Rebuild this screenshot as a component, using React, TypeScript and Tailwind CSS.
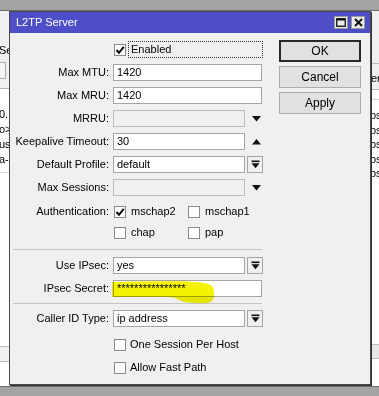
import React from "react";

const Check = () => (
  <svg width="10" height="10" viewBox="0 0 10 10" className="block">
    <path d="M1.5 5 L4 7.8 L8.7 1.8" stroke="#000" strokeWidth="1.9" fill="none" />
  </svg>
);

function Box({ checked }: { checked?: boolean }) {
  return (
    <div className="w-[12px] h-[12px] border border-[#8a8a8a] bg-white flex items-center justify-center shrink-0">
      {checked ? <Check /> : null}
    </div>
  );
}

const DownTri = () => (
  <svg width="9" height="6" viewBox="0 0 9 6" className="block">
    <polygon points="0,0 9,0 4.5,5.5" fill="#111" />
  </svg>
);
const UpTri = () => (
  <svg width="9" height="6" viewBox="0 0 9 6" className="block">
    <polygon points="0,5.5 9,5.5 4.5,0" fill="#111" />
  </svg>
);
const DropIcon = () => (
  <svg width="9" height="9" viewBox="0 0 9 9" className="block">
    <rect x="0.5" y="0.5" width="8" height="1.6" fill="#111" />
    <polygon points="0.5,3.3 8.5,3.3 4.5,8.3" fill="#111" />
  </svg>
);

function Label({ children }: { children: React.ReactNode }) {
  return <div className="w-[96px] text-right whitespace-nowrap leading-[17px]">{children}</div>;
}

function Input({ value, disabled, w }: { value?: string; disabled?: boolean; w: string }) {
  return (
    <div
      className={`${w} h-[17px] border ${disabled ? "border-[#bcbcbc] bg-[#f0f0f0]" : "border-[#a5a5a5] bg-white"} pl-[3px] leading-[15px] whitespace-nowrap overflow-hidden`}
    >
      {value}
    </div>
  );
}

function Row({ label, children, mt }: { label: string; children: React.ReactNode; mt: string }) {
  return (
    <div className={`flex items-center h-[17px] ${mt}`}>
      <Label>{label}</Label>
      <div className="ml-[4px] flex items-center">{children}</div>
    </div>
  );
}

function DropField({ value }: { value: string }) {
  return (
    <>
      <Input value={value} w="w-[132px]" />
      <div className="ml-[2px] w-[16px] h-[17px] border border-[#a5a5a5] bg-[#f0f0f0] flex items-center justify-center">
        <DropIcon />
      </div>
    </>
  );
}

function Btn({ children, def }: { children: React.ReactNode; def?: boolean }) {
  return (
    <div
      className={`w-[82px] h-[22px] flex items-center justify-center ${def ? "border-2 border-[#2a2a2a] bg-[#e1e1e1]" : "border border-[#adadad] bg-[#e1e1e1]"} text-[12px]`}
    >
      {children}
    </div>
  );
}

export default function App() {
  return (
    <div className="relative w-[379px] h-[396px] overflow-hidden bg-[#a4a4a4] text-[11px] text-black font-['Liberation_Sans',Arial,sans-serif]">
      {/* background window */}
      <div className="mt-[10px] h-[377px] border-t border-b border-[#6c6c6c] bg-[#f0f0f0] flex">
        {/* left strip */}
        <div className="w-[10px] flex flex-col overflow-hidden">
          <div className="mt-[33px] h-[13px] leading-[13px] whitespace-nowrap -ml-[1px]">Se</div>
          <div className="mt-[5px] w-[6px] h-[17px] border border-l-0 border-[#adadad] bg-[#f5f5f5]" />
          <div className="mt-[9px] flex-1 border-t border-[#b5b5b5] bg-white flex flex-col">
            <div className="h-[16px]" />
            <div className="mt-[2px] h-[15px] leading-[15px] -ml-[1px]">0.</div>
            <div className="h-[15px] leading-[15px] -ml-[1px]">o&gt;</div>
            <div className="h-[15px] leading-[15px] -ml-[1px]">us</div>
            <div className="h-[15px] leading-[15px] -ml-[1px]">a-</div>
            <div className="mt-[5px] border-t border-[#dcdcdc]" />
            <div className="mt-[173px] h-[16px] border-t border-b border-[#bdbdbd] bg-[#f0f0f0]" />
          </div>
        </div>
        <div className="flex-1" />
        {/* right strip */}
        <div className="w-[8px] flex flex-col overflow-hidden">
          <div className="mt-[52px] border-t border-[#bdbdbd]" />
          <div className="mt-[8px] h-[13px] leading-[13px] whitespace-nowrap">erv</div>
          <div className="mt-[4px] flex-1 border-t border-[#bdbdbd] bg-white flex flex-col">
            <div className="h-[10px] border-b border-[#d5d5d5]" />
            <div className="mt-[8px] h-[14.5px] leading-[14px] -ml-[1px]">ps</div>
            <div className="h-[14.5px] leading-[14px] -ml-[1px]">ps</div>
            <div className="h-[14.5px] leading-[14px] -ml-[1px]">ps</div>
            <div className="h-[14.5px] leading-[14px] -ml-[1px]">ps</div>
            <div className="h-[14.5px] leading-[14px] -ml-[1px]">ps</div>
            <div className="mt-[163px] h-[15px] border-t border-b border-[#bdbdbd] bg-[#e6e6e6]" />
          </div>
        </div>
      </div>

      {/* dialog window */}
      <div className="absolute left-[9px] top-[11px] w-[362px] h-[374px] border border-[#4a4a4a] bg-[#f0f0f0] flex flex-col shadow-[1px_1px_0_#333]">
        <div className="h-[21px] bg-[#4e4ec8] flex items-center pl-[6px] pr-[5px] text-white text-[11px]">
          <div className="flex-1 leading-[21px]">L2TP Server</div>
          <div className="flex gap-[3px]">
            <div className="w-[14px] h-[13px] bg-[#ececec] border border-[#9a9a9a] flex items-center justify-center">
              <svg width="10" height="9" viewBox="0 0 10 9" className="block">
                <rect x="0.75" y="0.75" width="8.5" height="7.5" fill="none" stroke="#111" strokeWidth="1.3" />
                <rect x="0.5" y="0.5" width="9" height="2" fill="#111" />
              </svg>
            </div>
            <div className="w-[14px] h-[13px] bg-[#ececec] border border-[#9a9a9a] flex items-center justify-center">
              <svg width="9" height="9" viewBox="0 0 9 9" className="block">
                <path d="M1 1 L8 8 M8 1 L1 8" stroke="#111" strokeWidth="2" />
              </svg>
            </div>
          </div>
        </div>

        <div className="flex">
          {/* form */}
          <div className="pl-[3px] pt-[8px] flex flex-col w-[253px]">
            <div className="flex items-center h-[17px]">
              <div className="w-[96px]" />
              <div className="ml-[4px] flex items-center">
                <div className="ml-[1px]"><Box checked /></div>
                <div className="ml-[2px] w-[135px] h-[17px] border border-dotted border-[#333] pl-[2px] leading-[15px]">Enabled</div>
              </div>
            </div>
            <Row label="Max MTU:" mt="mt-[6px]"><Input value="1420" w="w-[149px]" /></Row>
            <Row label="Max MRU:" mt="mt-[6px]"><Input value="1420" w="w-[149px]" /></Row>
            <Row label="MRRU:" mt="mt-[6px]">
              <Input disabled w="w-[132px]" />
              <div className="ml-[7px]"><DownTri /></div>
            </Row>
            <Row label="Keepalive Timeout:" mt="mt-[6px]">
              <Input value="30" w="w-[132px]" />
              <div className="ml-[7px]"><UpTri /></div>
            </Row>
            <Row label="Default Profile:" mt="mt-[6px]"><DropField value="default" /></Row>
            <Row label="Max Sessions:" mt="mt-[6px]">
              <Input disabled w="w-[132px]" />
              <div className="ml-[7px]"><DownTri /></div>
            </Row>
            <Row label="Authentication:" mt="mt-[7px]">
              <div className="w-[75px] flex items-center"><div className="ml-[1px]"><Box checked /></div><span className="ml-[5px]">mschap2</span></div>
              <div className="flex items-center"><Box /><span className="ml-[5px]">mschap1</span></div>
            </Row>
            <div className="flex items-center h-[17px] mt-[4px]">
              <div className="w-[96px]" />
              <div className="ml-[4px] flex items-center">
                <div className="w-[75px] flex items-center"><div className="ml-[1px]"><Box /></div><span className="ml-[5px]">chap</span></div>
                <div className="flex items-center"><Box /><span className="ml-[5px]">pap</span></div>
              </div>
            </div>
            <div className="mt-[8px] w-[249px] border-t border-[#c4c4c4]" />
            <Row label="Use IPsec:" mt="mt-[7px]"><DropField value="yes" /></Row>
            <Row label="IPsec Secret:" mt="mt-[6px]"><Input value="****************" w="w-[149px]" /></Row>
            <div className="mt-[6px] w-[249px] border-t border-[#c4c4c4]" />
            <Row label="Caller ID Type:" mt="mt-[6px]"><DropField value="ip address" /></Row>
            <div className="flex items-center h-[17px] mt-[9px]">
              <div className="w-[96px]" />
              <div className="ml-[4px] flex items-center"><div className="ml-[1px]"><Box /></div><span className="ml-[4px]">One Session Per Host</span></div>
            </div>
            <div className="flex items-center h-[17px] mt-[6px]">
              <div className="w-[96px]" />
              <div className="ml-[4px] flex items-center"><div className="ml-[1px]"><Box /></div><span className="ml-[4px]">Allow Fast Path</span></div>
            </div>
          </div>
          {/* buttons */}
          <div className="ml-[16px] pt-[7px] flex flex-col gap-[4px]">
            <Btn def>OK</Btn>
            <Btn>Cancel</Btn>
            <Btn>Apply</Btn>
          </div>
        </div>
      </div>

      {/* highlighter mark */}
      <svg className="absolute left-[108px] top-[278px] mix-blend-multiply pointer-events-none" width="112" height="28" viewBox="0 0 112 28">
        <path d="M4,4 C30,3.5 60,3 80,3.5 C90,4 100,5 104,8 C107,12 107,21 103,24 C96,26 85,25 76,24 C70,22 68,19 60,19 L4,19 Z" fill="#f4f400" />
      </svg>
    </div>
  );
}
